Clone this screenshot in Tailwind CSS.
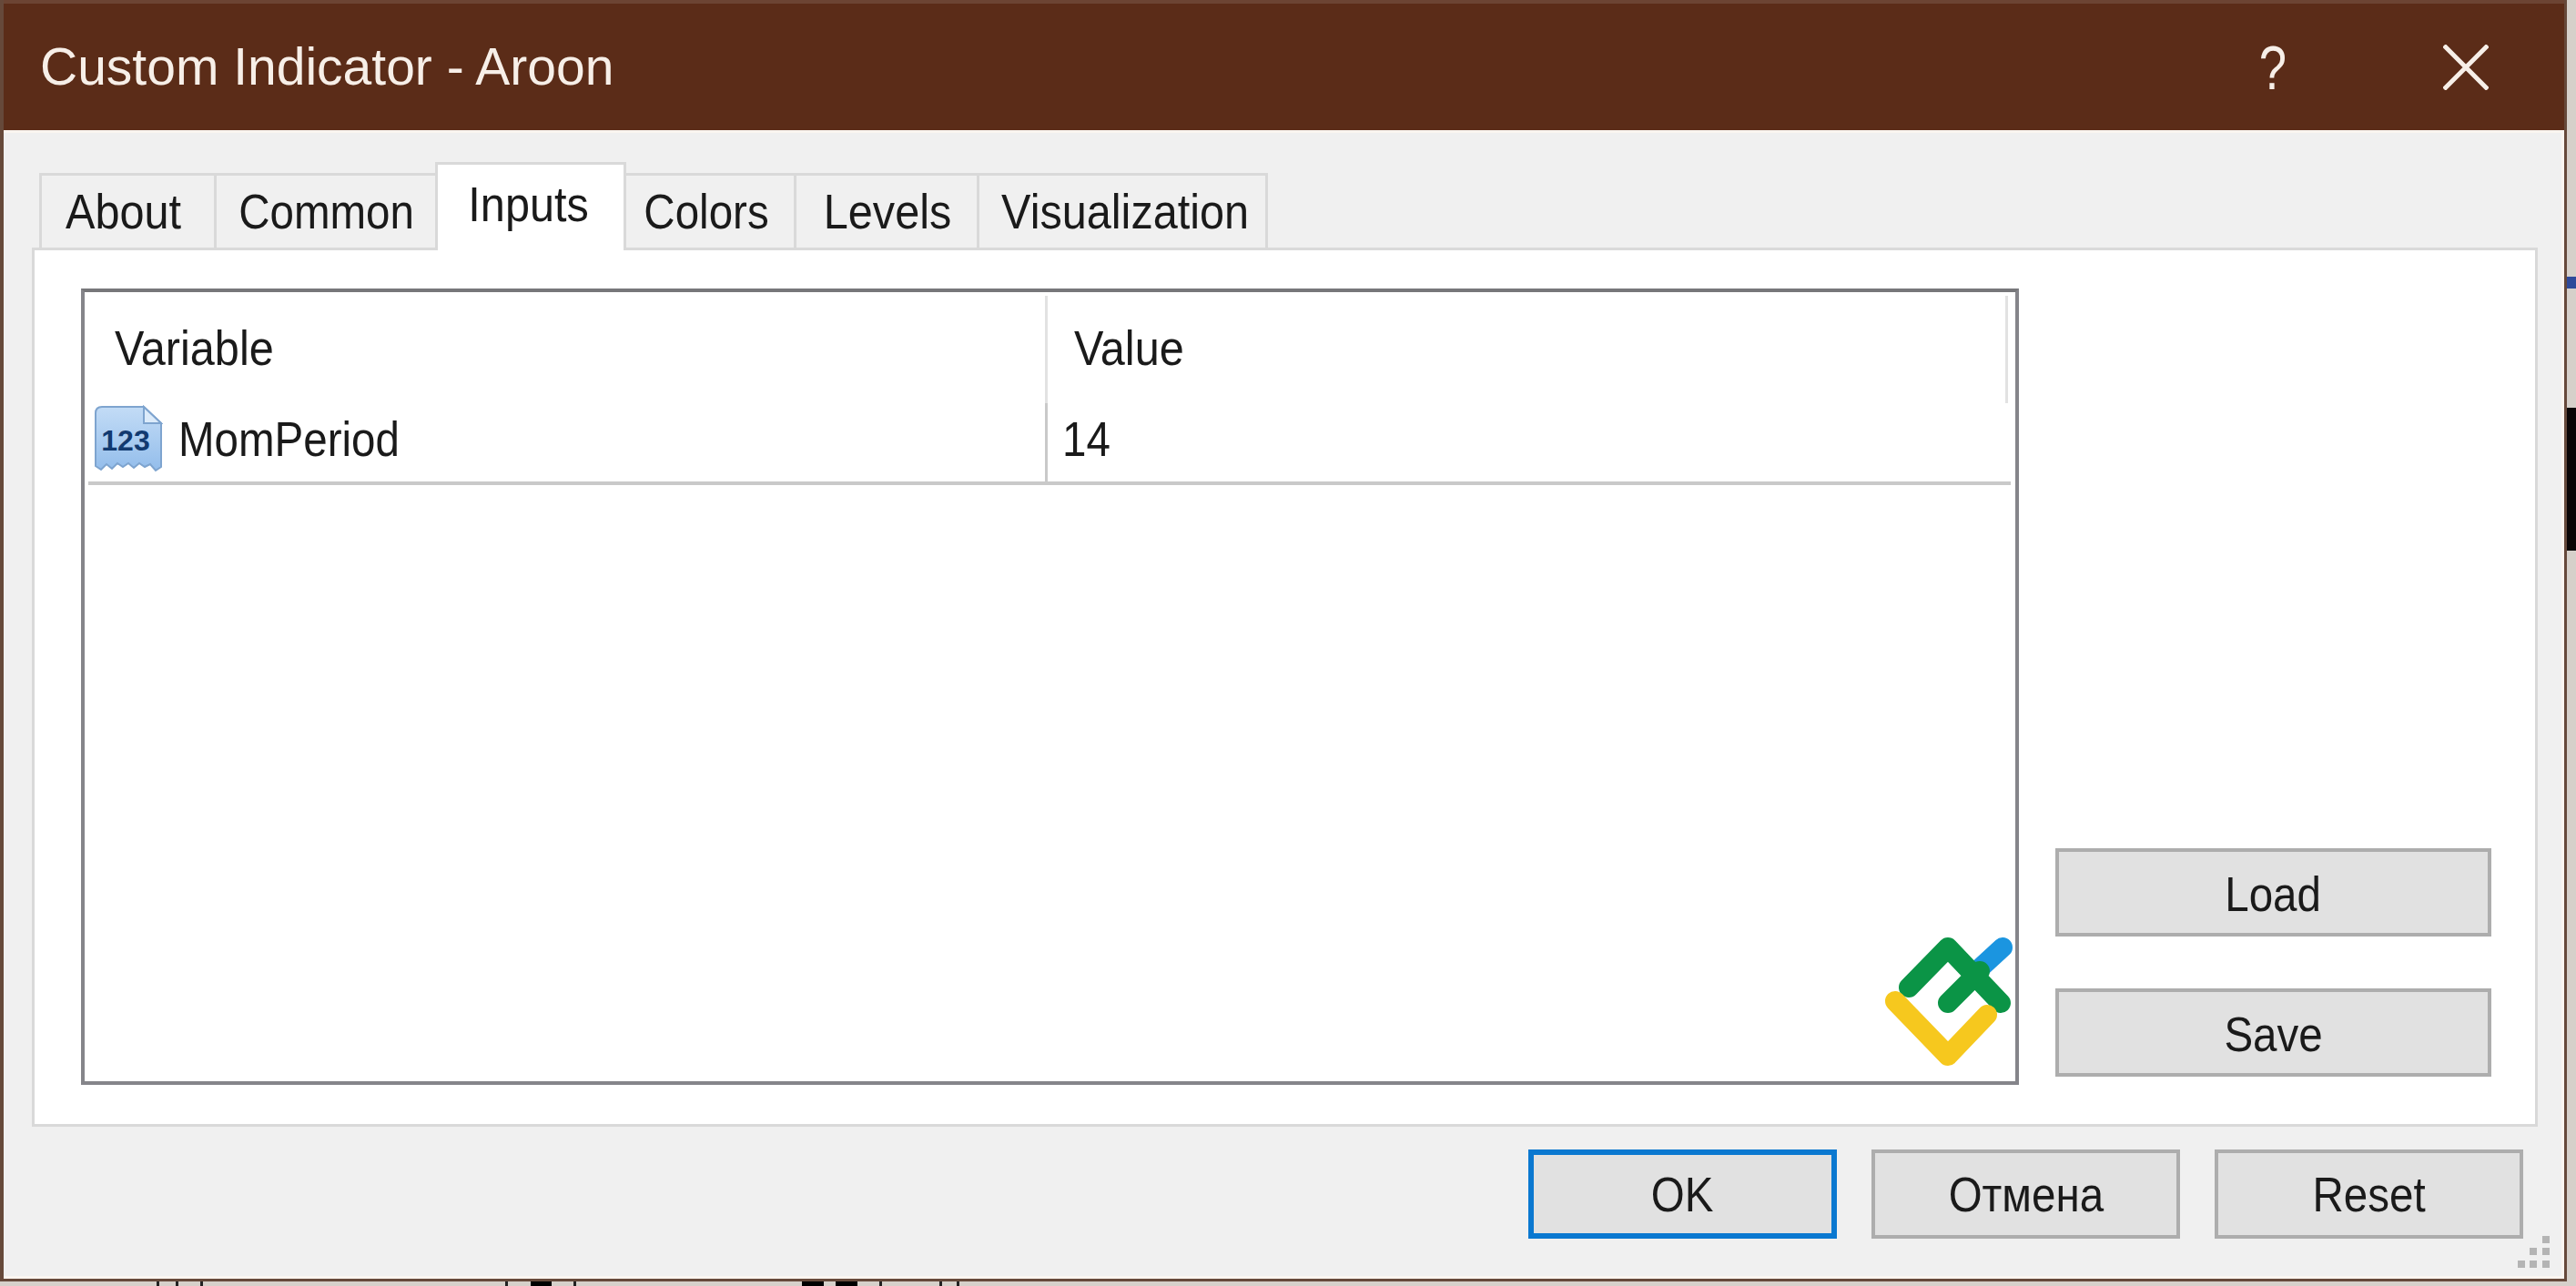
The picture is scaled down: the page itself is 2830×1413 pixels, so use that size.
<!DOCTYPE html>
<html lang="en">
<head>
  <meta charset="UTF-8">
  <script src="https://cdn.jsdelivr.net/npm/@tailwindcss/browser@4"></script>
  <title>Custom Indicator - Aroon</title>
</head>
<body class="w-[2830px] h-[1413px] overflow-hidden bg-[#d6d0ca] font-['Liberation_Sans',sans-serif] text-[54px] text-[#1a1a1a] relative">
  <!-- bits of the chart behind the dialog -->
  <div class="absolute left-[2820px] top-[304px] w-[10px] h-[13px] bg-[#2f4a9a]"></div>
  <div class="absolute left-[2820px] top-[448px] w-[10px] h-[157px] bg-[#0a0505]"></div>
  <div class="absolute left-[172px] top-[1408px] w-[3px] h-[5px] bg-[#222]"></div>
  <div class="absolute left-[193px] top-[1408px] w-[3px] h-[5px] bg-[#222]"></div>
  <div class="absolute left-[220px] top-[1408px] w-[3px] h-[5px] bg-[#222]"></div>
  <div class="absolute left-[555px] top-[1408px] w-[3px] h-[5px] bg-[#222]"></div>
  <div class="absolute left-[583px] top-[1408px] w-[23px] h-[5px] bg-black"></div>
  <div class="absolute left-[630px] top-[1408px] w-[3px] h-[5px] bg-[#222]"></div>
  <div class="absolute left-[881px] top-[1408px] w-[24px] h-[5px] bg-black"></div>
  <div class="absolute left-[918px] top-[1408px] w-[24px] h-[5px] bg-black"></div>
  <div class="absolute left-[966px] top-[1408px] w-[3px] h-[5px] bg-[#222]"></div>
  <div class="absolute left-[1032px] top-[1408px] w-[3px] h-[5px] bg-[#222]"></div>
  <div class="absolute left-[1051px] top-[1408px] w-[3px] h-[5px] bg-[#222]"></div>

  <!-- window -->
  <div class="w-[2820px] h-[1408px] flex flex-col border-l-[4px] border-r-[3px] border-b-[3px] border-[#66493a] bg-[#f0f0f0]">
    <div class="h-[143px] shrink-0 flex items-center justify-between bg-[#5b2c18] border-t-[4px] border-[#6c4433] pl-[40px] pr-[83px] text-[#f7efe8]">
      <span class="text-[57px] whitespace-nowrap">Custom Indicator - Aroon</span>
      <div class="flex items-center gap-[168px]">
        <span class="text-[68px] leading-none scale-x-[.8]">?</span>
        <svg width="50" height="50" viewBox="0 0 50 50" fill="none" stroke="#f7efe8" stroke-width="5"><path d="M1 1 49 49M49 1 1 49"/></svg>
      </div>
    </div>
    <div class="flex-1 flex flex-col pl-[31px] pr-[26px] border-t-[3px] border-r-[3px] border-b-[3px] border-[#faf5f0]">
      <!-- tabs -->
      <div class="h-[129px] shrink-0 flex items-end pl-[8px] relative z-10 -mb-[3px]">
        <div class="w-[192px] h-[85px] pr-[10px] flex items-center justify-center border-[3px] border-r-0 border-[#d9d9d9] bg-[#f0f0f0]"><span class="scale-x-[.9]">About</span></div>
        <div class="w-[243px] h-[85px] pl-[2px] flex items-center justify-center border-[3px] border-r-0 border-[#d9d9d9] bg-[#f0f0f0]"><span class="scale-x-[.88]">Common</span></div>
        <div class="w-[210px] h-[97px] pb-[8px] pr-[4px] flex items-center justify-center border-[3px] border-b-0 border-[#d9d9d9] bg-white"><span class="scale-x-[.9]">Inputs</span></div>
        <div class="w-[187px] h-[85px] pr-[7px] flex items-center justify-center border-[3px] border-l-0 border-[#d9d9d9] bg-[#f0f0f0]"><span class="scale-x-[.88]">Colors</span></div>
        <div class="w-[201px] h-[85px] pl-[2px] flex items-center justify-center border-[3px] border-l-0 border-[#d9d9d9] bg-[#f0f0f0]"><span class="scale-x-[.9]">Levels</span></div>
        <div class="w-[317px] h-[85px] pl-[6px] flex items-center justify-center border-[3px] border-l-0 border-[#d9d9d9] bg-[#f0f0f0]"><span class="scale-x-[.9] whitespace-nowrap">Visualization</span></div>
      </div>
      <!-- panel -->
      <div class="h-[966px] shrink-0 flex border-[3px] border-[#d9d9d9] bg-white pt-[42px] pl-[51px]">
        <div class="w-[2129px] h-[875px] shrink-0 relative border-[4px] border-[#85858a] border-t-[#77777a] p-[4px]">
          <div class="flex h-[118px]">
            <div class="w-[1054px] pl-[29px] pt-[17px] border-r-[3px] border-[#e2e2e2]"><span class="inline-block origin-left scale-x-[.9]">Variable</span></div>
            <div class="w-[1055px] pl-[29px] pt-[17px] border-r-[3px] border-[#e2e2e2]"><span class="inline-block origin-left scale-x-[.9]">Value</span></div>
          </div>
          <div class="flex h-[90px] border-b-[4px] border-[#c9c9c9] w-[2112px]">
            <div class="w-[1054px] flex items-center gap-[17px] pl-[6px] pb-[8px] border-r-[3px] border-[#c9c9c9]">
              <svg width="76" height="74" viewBox="0 0 76 74" class="shrink-0">
                <defs>
                  <linearGradient id="sheet" x1="0" y1="0" x2="0" y2="1">
                    <stop offset="0" stop-color="#c3dcf6"/>
                    <stop offset="1" stop-color="#93bdeb"/>
                  </linearGradient>
                </defs>
                <path d="M9 2H55L74 20V68L68 72 62 65 56 68 50 64 44 69 38 64 32 68 26 64 20 70 14 65 8 71 2 67V9Q2 2 9 2Z" fill="url(#sheet)" stroke="#7ea4cf" stroke-width="2"/>
                <path d="M55 2V20H74Z" fill="#dcebfa" stroke="#7ea4cf" stroke-width="2"/>
                <text x="35" y="50" text-anchor="middle" font-family="Liberation Sans" font-weight="700" font-size="32" fill="#123a70">123</text>
              </svg>
              <span class="inline-block origin-left scale-x-[.88]">MomPeriod</span>
            </div>
            <div class="flex-1 flex items-center pl-[16px] pb-[8px]"><span class="inline-block origin-left scale-x-[.88]">14</span></div>
          </div>
          <!-- watermark logo -->
          <svg class="absolute left-[1982px] top-[711px] overflow-visible" width="140" height="145" viewBox="0 0 140 145" fill="none" stroke-width="22" stroke-linecap="round" stroke-linejoin="round">
            <path d="M100 32 125 9" stroke="#1b95e0"/>
            <path d="M22 53 65 9 123 70M65 70 100 35" stroke="#0b9446"/>
            <path d="M7 68 65 128 108 83" stroke="#f6c81e"/>
          </svg>
        </div>
        <div class="flex-1 flex flex-col pl-[40px] pr-[48px] pt-[615px] gap-[57px]">
          <div class="h-[97px] pt-[3px] flex items-center justify-center border-[4px] border-[#adadad] bg-[#e1e1e1]"><span class="scale-x-[.88]">Load</span></div>
          <div class="h-[97px] pt-[3px] flex items-center justify-center border-[4px] border-[#adadad] bg-[#e1e1e1]"><span class="scale-x-[.88]">Save</span></div>
        </div>
      </div>
      <!-- bottom buttons -->
      <div class="flex justify-end gap-[38px] pt-[25px] pr-[16px]">
        <div class="w-[339px] h-[98px] flex items-center justify-center border-[6px] border-[#0a78d0] bg-[#e1e1e1]"><span class="scale-x-[.88]">OK</span></div>
        <div class="w-[339px] h-[98px] flex items-center justify-center border-[4px] border-[#adadad] bg-[#e1e1e1]"><span class="scale-x-[.88]">Отмена</span></div>
        <div class="w-[339px] h-[98px] flex items-center justify-center border-[4px] border-[#adadad] bg-[#e1e1e1]"><span class="scale-x-[.88]">Reset</span></div>
      </div>
    </div>
  </div>
  <!-- resize grip -->
  <svg class="absolute left-[2765px] top-[1357px]" width="37" height="37" viewBox="0 0 37 37" fill="#b4b4b4">
    <rect x="28" y="1" width="8" height="8"/>
    <rect x="14" y="14" width="8" height="8"/><rect x="28" y="14" width="8" height="8"/>
    <rect x="1" y="28" width="8" height="8"/><rect x="14" y="28" width="8" height="8"/><rect x="28" y="28" width="8" height="8"/>
  </svg>
</body>
</html>
